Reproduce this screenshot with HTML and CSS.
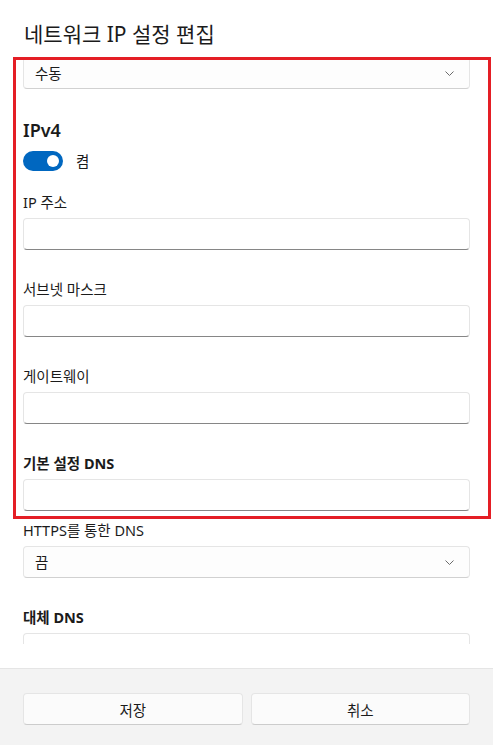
FILE: index.html
```html
<!DOCTYPE html>
<html lang="ko">
<head>
<meta charset="utf-8">
<title>네트워크 IP 설정 편집</title>
<link rel="stylesheet" href="styles.css">
</head>
<body>
<div class="dialog">
  <div class="dialog-body">
    <h1 class="title">네트워크 IP 설정 편집</h1>
    <div class="scroll">
      <div class="select">
        <span>수동</span>
        <svg class="chev" width="9" height="5" viewBox="0 0 9 5"><path d="M0.5 0.5 L4.5 4.5 L8.5 0.5" fill="none" stroke="#6b6b6b" stroke-width="1"/></svg>
      </div>
      <h2 class="section">IPv4</h2>
      <div class="toggle-row">
        <span class="toggle"><span class="knob"></span></span>
        <span class="toggle-label">켬</span>
      </div>
      <div class="field first">
        <div class="label">IP 주소</div>
        <div class="input"></div>
      </div>
      <div class="field">
        <div class="label">서브넷 마스크</div>
        <div class="input"></div>
      </div>
      <div class="field">
        <div class="label">게이트웨이</div>
        <div class="input"></div>
      </div>
      <div class="field">
        <div class="label bold">기본 설정 DNS</div>
        <div class="input"></div>
      </div>
      <div class="field tight">
        <div class="label">HTTPS를 통한 DNS</div>
        <div class="select">
          <span>끔</span>
          <svg class="chev" width="9" height="5" viewBox="0 0 9 5"><path d="M0.5 0.5 L4.5 4.5 L8.5 0.5" fill="none" stroke="#6b6b6b" stroke-width="1"/></svg>
        </div>
      </div>
      <div class="field">
        <div class="label bold">대체 DNS</div>
        <div class="input"></div>
      </div>
    </div>
  </div>
  <div class="footer">
    <button class="btn">저장</button>
    <button class="btn">취소</button>
  </div>
  <div class="highlight"></div>
</div>
</body>
</html>
```

FILE: styles.css
```css
* { box-sizing: border-box; }
html, body { margin: 0; padding: 0; }
body {
  background: #ffffff;
  font-family: "Noto Sans", "Noto Sans CJK KR", sans-serif;
  color: #1b1b1b;
  font-size: 14.5px;
}
.dialog {
  position: relative;
  width: 493px;
  height: 745px;
  display: flex;
  flex-direction: column;
  overflow: hidden;
}
.dialog-body {
  flex: 1;
  min-height: 0;
  display: flex;
  flex-direction: column;
  padding: 20px 23px 24px 23px;
}
.title {
  margin: 0 0 9px 1px;
  font-size: 21px;
  line-height: 28px;
  font-weight: 400;
}
.scroll {
  flex: 1;
  min-height: 0;
  overflow: hidden;
}
.select {
  height: 32px;
  border: 1px solid #e5e5e5;
  border-bottom-color: #d1d1d1;
  border-radius: 4px;
  background: #fdfdfd;
  display: flex;
  align-items: center;
  justify-content: space-between;
  padding: 0 15px 0 11px;
  line-height: 20px;
}
.chev { display: block; }
.section {
  margin: 28px 0 8px 0;
  font-size: 18px;
  line-height: 26px;
  font-weight: 600;
}
.toggle-row {
  display: flex;
  align-items: center;
  gap: 13px;
  height: 20px;
}
.toggle {
  width: 40px;
  height: 20px;
  border-radius: 10px;
  background: #0067c0;
  display: flex;
  align-items: center;
  justify-content: flex-end;
  padding-right: 4px;
}
.knob {
  width: 12px;
  height: 12px;
  border-radius: 50%;
  background: #ffffff;
}
.toggle-label { line-height: 20px; }
.field { margin-top: 29px; }
.field.first { margin-top: 21px; }
.field.tight { margin-top: 9px; }
.label {
  line-height: 20px;
  margin-bottom: 6px;
}
.label.bold { font-weight: 700; }
.input {
  height: 32px;
  border: 1px solid #e5e5e5;
  border-bottom: 1px solid #868686;
  border-radius: 4px;
  background: #ffffff;
}
.footer {
  flex: none;
  height: 77px;
  background: #f3f3f3;
  border-top: 1px solid #e5e5e5;
  padding: 24px 23px 20px 23px;
  display: grid;
  grid-template-columns: 1fr 1fr;
  gap: 8px;
}
.btn {
  height: 32px;
  border: 1px solid #e5e5e5;
  border-bottom-color: #cccccc;
  border-radius: 4px;
  background: #fbfbfb;
  font-family: inherit;
  font-size: 14.5px;
  color: #1b1b1b;
  padding: 0;
}
.highlight {
  position: absolute;
  left: 13px;
  top: 57px;
  width: 478px;
  height: 462px;
  border: 3px solid #e41e25;
  pointer-events: none;
}
```
